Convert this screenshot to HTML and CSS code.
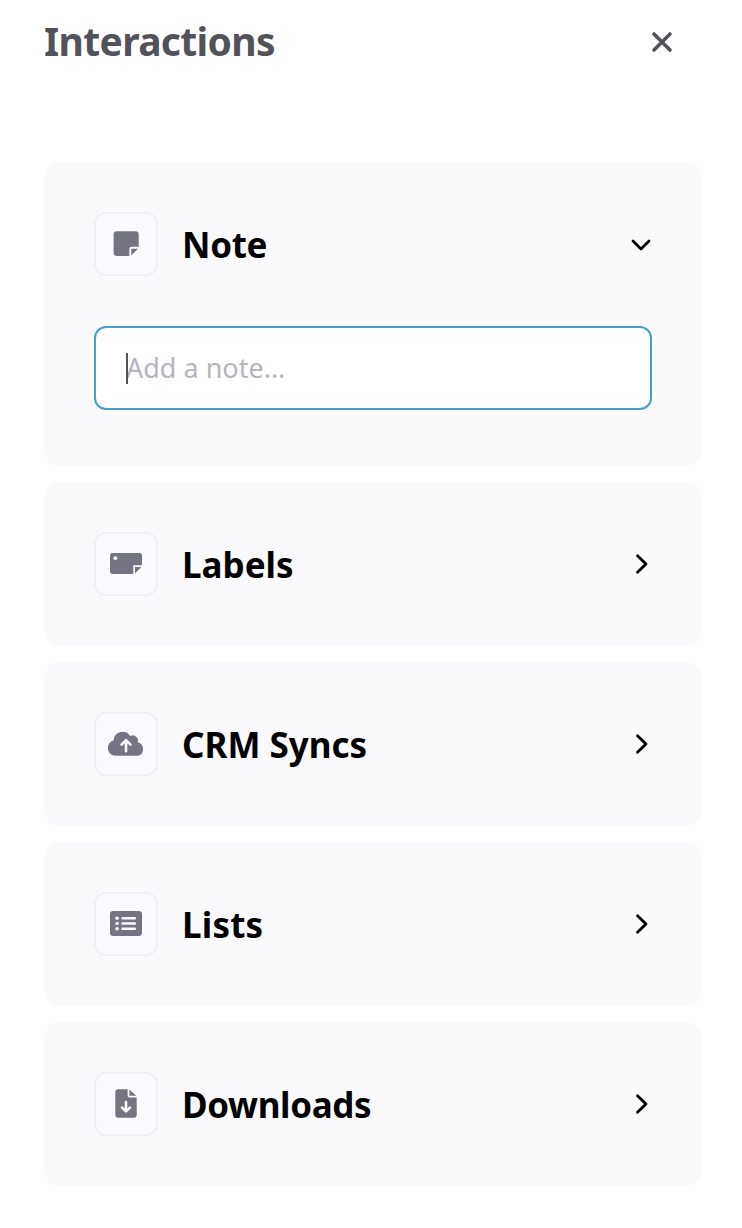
FILE: index.html
```html
<!DOCTYPE html>
<html lang="en">
<head>
  <meta charset="UTF-8">
  <meta name="viewport" content="width=device-width, initial-scale=1.0">
  <title>Interactions</title>
  <link rel="stylesheet" href="styles.css">
</head>
<body>
  <div class="panel">
    <div class="panel-header">
      <h1 class="panel-title">Interactions</h1>
      <svg class="close" viewBox="0 0 24 24"><path d="M4 4 20 20M20 4 4 20"/></svg>
    </div>
    <div class="cards">
      <div class="card card-open">
        <div class="card-header">
          <div class="icon">
            <svg viewBox="12 12 40 40">
              <path d="M22.8 19.2H41.5A3.2 3.2 0 0 1 44.7 22.4V34.7H37.5A2.2 2.2 0 0 0 35.3 36.9V44H22.8A3.2 3.2 0 0 1 19.6 40.8V22.4A3.2 3.2 0 0 1 22.8 19.2ZM38.3 36.7H44L37.2 43.6V37.8A1.1 1.1 0 0 1 38.3 36.7Z"/>
            </svg>
          </div>
          <h2 class="card-title note">Note</h2>
          <svg class="arrow" viewBox="0 0 24 24"><path d="M4 9 12 17 20 9"/></svg>
        </div>
        <div class="field">
          <span class="caret"></span>
          <input class="note-input" type="text" placeholder="Add a note...">
        </div>
      </div>
      <div class="card">
        <div class="card-header">
          <div class="icon">
            <svg viewBox="12 12 40 40">
              <path d="M18.7 21H45.3A2.7 2.7 0 0 1 48 23.7V33.2H39.3V42H18.7A2.7 2.7 0 0 1 16 39.3V23.7A2.7 2.7 0 0 1 18.7 21ZM41 35H47.4L41 41.6Z"/>
              <circle class="cut" cx="21.3" cy="26.2" r="1.9"/>
            </svg>
          </div>
          <h2 class="card-title labels">Labels</h2>
          <svg class="arrow" viewBox="0 0 24 24"><path d="M8.5 3.8 17 12 8.5 20.2"/></svg>
        </div>
      </div>
      <div class="card">
        <div class="card-header">
          <div class="icon">
            <svg viewBox="12 12 40 40">
              <path d="M22.3 43.8A7.9 7.9 0 0 1 19.6 28.3A9 9 0 0 1 36.2 24A5.4 5.4 0 0 1 43.7 30.6A6.7 6.7 0 0 1 43.2 43.8Z"/>
              <path class="cut-line" d="M32 39.2V28.7M27.5 32.6 32 28.2 36.5 32.6"/>
            </svg>
          </div>
          <h2 class="card-title crm">CRM Syncs</h2>
          <svg class="arrow" viewBox="0 0 24 24"><path d="M8.5 3.8 17 12 8.5 20.2"/></svg>
        </div>
      </div>
      <div class="card">
        <div class="card-header">
          <div class="icon">
            <svg viewBox="12 12 40 40">
              <rect x="16" y="19" width="32" height="25" rx="3.2"/>
              <circle class="cut" cx="23.1" cy="26.2" r="1.8"/>
              <circle class="cut" cx="23.1" cy="31.5" r="1.8"/>
              <circle class="cut" cx="23.1" cy="36.8" r="1.8"/>
              <path class="cut-line" d="M28.6 26.2H40.8M28.6 31.5H40.8M28.6 36.8H40.8"/>
            </svg>
          </div>
          <h2 class="card-title lists">Lists</h2>
          <svg class="arrow" viewBox="0 0 24 24"><path d="M8.5 3.8 17 12 8.5 20.2"/></svg>
        </div>
      </div>
      <div class="card">
        <div class="card-header">
          <div class="icon">
            <svg viewBox="12 12 40 40">
              <path d="M24.3 17.2H33.6V23.6A1.8 1.8 0 0 0 35.4 25.4H42.7V42.8A3 3 0 0 1 39.7 45.8H24.3A3 3 0 0 1 21.3 42.8V20.2A3 3 0 0 1 24.3 17.2ZM35.4 17.4 42.2 23.7H35.4Z"/>
              <path class="cut-line" d="M32 30V39M28 35.6 32 39.4 36 35.6"/>
            </svg>
          </div>
          <h2 class="card-title downloads">Downloads</h2>
          <svg class="arrow" viewBox="0 0 24 24"><path d="M8.5 3.8 17 12 8.5 20.2"/></svg>
        </div>
      </div>
    </div>
  </div>
</body>
</html>
```
FILE: styles.css
```css
body {
  margin: 0;
  background: #fff;
  font-family: "Noto Sans", sans-serif;
}
h1, h2 {
  margin: 0;
}
.panel {
  box-sizing: border-box;
  height: 1228px;
  padding: 14px 40px 0 44px;
}
.panel-header {
  display: flex;
  align-items: center;
  justify-content: space-between;
  height: 56px;
  padding-right: 28px;
}
.panel-title {
  font-size: 39px;
  line-height: 54px;
  padding-bottom: 2px;
  color: #52525b;
  letter-spacing: -0.65px;
}
.close {
  width: 24px;
  height: 24px;
  fill: none;
  stroke: #52525b;
  stroke-width: 3.6;
  stroke-linecap: round;
}
.cards {
  display: flex;
  flex-direction: column;
  gap: 16px;
  margin-top: 92px;
}
.card {
  padding: 50px;
  border-radius: 16px;
  background: #fafafc;
}
.card-open {
  padding-bottom: 56px;
}
.card-header {
  display: flex;
  align-items: center;
  height: 64px;
}
.icon {
  display: flex;
  align-items: center;
  justify-content: center;
  box-sizing: border-box;
  width: 64px;
  height: 64px;
  border: 2px solid #f1f0f7;
  border-radius: 12px;
  background: #fbfaff;
}
.icon svg {
  width: 40px;
  height: 40px;
  fill: #757483;
}
.icon .cut {
  fill: #fbfaff;
}
.icon .cut-line {
  fill: none;
  stroke: #fbfaff;
  stroke-width: 2.6;
  stroke-linecap: round;
  stroke-linejoin: round;
}
.card-title {
  flex: 1;
  margin-left: 24px;
  padding-top: 2px;
  font-size: 35px;
  line-height: 62px;
  color: #000;
}
.note {
  letter-spacing: -0.3px;
}
.lists {
  letter-spacing: 0.2px;
}
.downloads {
  letter-spacing: -0.35px;
}
.arrow {
  width: 24px;
  height: 24px;
  margin-right: -1px;
  fill: none;
  stroke: #000;
  stroke-width: 2.8;
  stroke-linecap: round;
  stroke-linejoin: round;
}
.field {
  position: relative;
  margin-top: 50px;
}
.note-input {
  display: block;
  box-sizing: border-box;
  width: 100%;
  height: 84px;
  padding: 0 30px 2px;
  border: 2px solid #46a0ca;
  border-radius: 12px;
  outline: none;
  background: #fff;
  font-family: inherit;
  font-size: 27px;
  color: #52525b;
}
.note-input::placeholder {
  color: #b5b4bf;
}
.caret {
  position: absolute;
  left: 32px;
  top: 27px;
  width: 2px;
  height: 31px;
  background: #52525b;
}
```
